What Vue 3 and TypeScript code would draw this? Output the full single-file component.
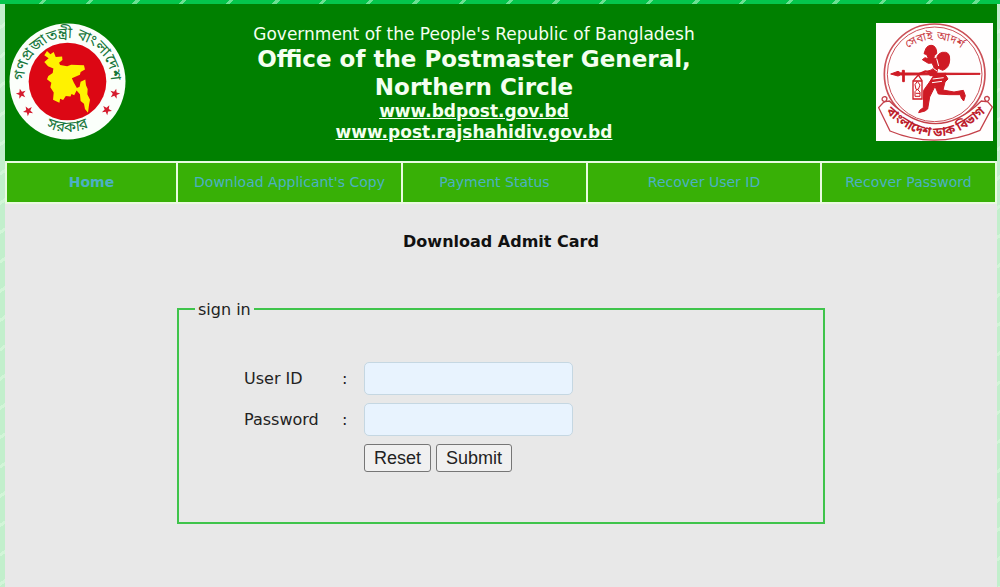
<script setup lang="ts">
import { ref } from 'vue'

interface NavItem {
  label: string
  current: boolean
}

const navItems: NavItem[] = [
  { label: 'Home', current: true },
  { label: "Download Applicant's Copy", current: false },
  { label: 'Payment Status', current: false },
  { label: 'Recover User ID', current: false },
  { label: 'Recover Password', current: false },
]

const stars: { x: number; y: number; turn: number }[] = [
  { x: 21, y: 94, turn: -15 },
  { x: 28, y: 111, turn: -30 },
  { x: 106, y: 110, turn: 30 },
  { x: 114, y: 94, turn: 15 },
]

const userId = ref('')
const password = ref('')

function clearForm(): void {
  userId.value = ''
  password.value = ''
}
</script>

<template>
  <div class="page">
    <div class="sheet">
      <header class="banner">
        <svg class="seal" viewBox="9 24 116 116" role="img" aria-label="Government seal">
          <defs>
            <path id="seal-top" d="M26 95 A43 43 0 1 1 108 95" />
            <path id="seal-bottom" d="M27 112 A50 50 0 0 0 107 112" />
          </defs>
          <circle cx="67" cy="82" r="57.500" fill="#fbfffb" />
          <circle cx="67" cy="82" r="38.500" fill="#dc0714" />
          <g transform="scale(.3333)">
            <path
              d="M140 155 L150 165 L160 158 L166 173 L185 172 L186 182 L176 190 L179 197 L200 201 L212 196 L250 198 L253 210 L240 218 L238 226 L214 236 L220 250 L229 265 L237 262 L240 247 L254 240 L256 257 L261 268 L260 284 L268 300 L265 316 L262 339 L253 328 L250 312 L240 304 L238 284 L228 273 L221 287 L213 283 L210 291 L196 289 L188 301 L179 297 L177 309 L164 303 L158 300 L160 279 L150 263 L153 250 L140 239 L144 230 L157 221 L159 207 L143 201 L132 188 L145 177 L132 168 Z"
              fill="#fff200"
            />
          </g>
          <g v-for="star in stars" :key="star.x" :transform="`translate(${star.x} ${star.y}) rotate(${star.turn})`">
            <path d="M0 -5 L1.300 -1.600 L5 -1.500 L2 .8 L3 4.500 L0 2.300 L-3 4.500 L-2 .8 L-5 -1.500 L-1.300 -1.600 Z" fill="#d51c2e" />
          </g>
          <text class="bangla seal-text" text-anchor="middle"><textPath href="#seal-top" startOffset="50%">গণপ্রজাতন্ত্রী বাংলাদেশ</textPath></text>
          <text class="bangla seal-text" text-anchor="middle"><textPath href="#seal-bottom" startOffset="50%">সরকার</textPath></text>
        </svg>

        <div class="titles">
          <p class="government">Government of the People's Republic of Bangladesh</p>
          <h1>Office of the Postmaster General,<br />Northern Circle</h1>
          <a href="#bdpost">www.bdpost.gov.bd</a>
          <a href="#rajshahi">www.post.rajshahidiv.gov.bd</a>
        </div>

        <svg class="runner" viewBox="6 6 351 354" role="img" aria-label="Bangladesh Post Office">
          <defs>
            <path id="post-top" d="M72 114 A133 133 0 0 1 292 114" />
            <path id="post-bottom" d="M32 270 Q184 422 338 270" />
          </defs>
          <rect x="6" y="6" width="351" height="354" fill="#fffefe" />
          <g fill="none" stroke="#cb5057">
            <circle cx="182" cy="160" r="151" stroke-width="5" />
            <circle cx="182" cy="160" r="142" stroke-width="3" />
          </g>
          <path
            d="M34 242 C20 242 22 225 34 227 C43 231 38 242 28 245 L14 260 L48 330 Q182 386 318 328 L355 258 L342 243 C329 240 329 226 340 226 C350 230 346 241 336 242 L322 240 Q184 376 46 240 Z"
            fill="#fffefe"
            stroke="#c4414a"
            stroke-width="4"
          />
          <g fill="#cf1b25" stroke="#cf1b25" stroke-width="3" stroke-linejoin="round">
            <path d="M150 98 L155 84 Q161 72 174 73 Q187 76 188 93 L188 98 L182 103 L179 111 L188 113 Q190 98 205 94 Q229 90 227 117 Q226 141 206 148 L191 141 L188 158 L216 157 L214 164 L168 164 L160 151 L174 146 L180 139 L174 126 L163 127 L145 116 L153 110 L164 114 L158 101 Z" />
            <path d="M180 162 L216 164 L222 174 L213 183 L207 207 L240 213 L268 208 L274 224 L269 240 L262 231 L259 221 L224 221 L193 219 L183 196 L167 228 L161 264 L153 270 L134 275 L137 268 L148 260 L149 208 L166 184 Z" />
            <path d="M50 159 L72 151 L79 155 L85 156 V148 H91 V156 L318 157 V160 L91 162 V182 H86 V162 L79 162 L72 165 Z" />
          </g>
          <g fill="none" stroke="#cf1b25" stroke-width="4">
            <path d="M133 162 L118 179 M133 162 L144 179" />
            <path d="M117 180 H144 V234 H117 Z" />
            <path d="M123 191 L130 181 L138 192 L133 205 L126 205 Z M123 226 V212 L130 205 L138 213 V226 Z M125 217 H138" stroke-width="3" />
            <path d="M134 160 L154 151 L174 154" stroke-width="7" />
          </g>
          <path d="M188 113 L194 135 M178 142 L189 150 M176 174 L209 170 M174 185 L204 181" fill="none" stroke="#fffefe" stroke-width="3" />
          <text class="bangla motto" text-anchor="middle"><textPath href="#post-top" startOffset="50%">সেবাই আদর্শ</textPath></text>
          <text class="bangla department" text-anchor="middle"><textPath href="#post-bottom" startOffset="50%">বাংলাদেশ ডাক বিভাগ</textPath></text>
        </svg>
      </header>

      <nav aria-label="Main">
        <a v-for="item in navItems" :key="item.label" href="#" :class="{ current: item.current }">{{ item.label }}</a>
      </nav>

      <main>
        <h2>Download Admit Card</h2>
        <form @submit.prevent @reset.prevent="clearForm">
          <fieldset>
            <legend>sign in</legend>
            <div class="fields">
              <label for="user-id">User ID</label>
              <span>:</span>
              <input id="user-id" v-model="userId" type="text" autocomplete="username" />
              <label for="password">Password</label>
              <span>:</span>
              <input id="password" v-model="password" type="password" autocomplete="current-password" />
              <div class="actions">
                <button type="reset">Reset</button>
                <button type="submit">Submit</button>
              </div>
            </div>
          </fieldset>
        </form>
      </main>
    </div>
  </div>
</template>

<style>
body {
  margin: 0;
}
</style>

<style scoped>
.page {
  box-sizing: border-box;
  min-height: 100vh;
  padding: 4px 3px 0 5px;
  display: flex;
  background:
    repeating-linear-gradient(135deg, transparent 0 30px, #6be292 30px 33px) 0 0 / 100% 4px no-repeat,
    linear-gradient(#04c64b, #04c64b) 0 0 / 100% 4px no-repeat,
    repeating-linear-gradient(145deg, transparent 0 21px, #d2f5d8 21px 24px),
    #c2efcc;
  font-family: Verdana, "DejaVu Sans", sans-serif;
  color: #222;
}

.sheet {
  flex: 1;
  background: #e8e8e8;
}

.banner {
  display: grid;
  grid-template-columns: 117px 1fr 117px;
  align-items: start;
  padding: 19px 4px 18px;
  background: #008000;
  color: #f4fff0;
}

.seal,
.runner {
  display: block;
  width: 100%;
  overflow: visible;
}

.seal {
  height: 117px;
}

.runner {
  height: 118px;
}

.titles {
  display: flex;
  flex-direction: column;
  align-items: center;
  padding-top: 1px;
  padding-right: 54px;
  text-align: center;
}

.government,
h1,
h2 {
  margin: 0;
}

.government {
  font-size: 17px;
  line-height: 21px;
}

h1 {
  font-size: 23px;
  line-height: 28px;
}

.titles a {
  font-size: 17px;
  line-height: 21px;
  font-weight: bold;
  color: inherit;
}

.bangla {
  font-family: "Noto Sans Bengali", "Lohit Bengali", FreeSans, sans-serif;
}

.seal-text {
  font-size: 15px;
  fill: #16763a;
}

.motto {
  font-size: 34px;
  fill: #c83c45;
}

.department {
  font-size: 38px;
  font-weight: bold;
  fill: #bd202c;
}

nav {
  display: grid;
  grid-template-columns: 169fr 223fr 183fr 232fr 173fr;
  gap: 2px;
  padding: 2px;
  background: #e9fbe0;
}

nav a {
  background: #38b006;
  color: #4cb0c4;
  font-size: 14px;
  line-height: 39px;
  text-align: center;
  text-decoration: none;
  white-space: nowrap;
}

nav .current {
  font-weight: bold;
}

h2 {
  padding-top: 27px;
  font-size: 16px;
  line-height: 21px;
  text-align: center;
  color: #111;
}

form {
  width: 648px;
  max-width: 100%;
  margin: 46px auto 0;
}

fieldset {
  box-sizing: border-box;
  margin: 0;
  min-width: 0;
  padding: 42px 16px 50px 65px;
  border: 2px solid #3fc44b;
}

legend {
  margin-left: -49px;
  padding: 2px 3px 0;
  font-size: 16px;
  line-height: 20px;
}

.fields {
  display: grid;
  grid-template-columns: 98px 22px 209px;
  row-gap: 8px;
  align-items: center;
  font-size: 16px;
}

input {
  box-sizing: border-box;
  width: 100%;
  height: 33px;
  padding: 4px 8px;
  border: 1px solid #c5d7e2;
  border-radius: 5px;
  background: #e8f3fe;
  font: inherit;
}

.actions {
  grid-column: 3;
  display: flex;
  gap: 5px;
}

button {
  height: 28px;
  padding: 0 9px;
  border: 1px solid #767676;
  border-radius: 3px;
  background: #f0f0f0;
  color: #222;
  font-family: "Liberation Sans", Arial, sans-serif;
  font-size: 18px;
  line-height: 24px;
}
</style>
